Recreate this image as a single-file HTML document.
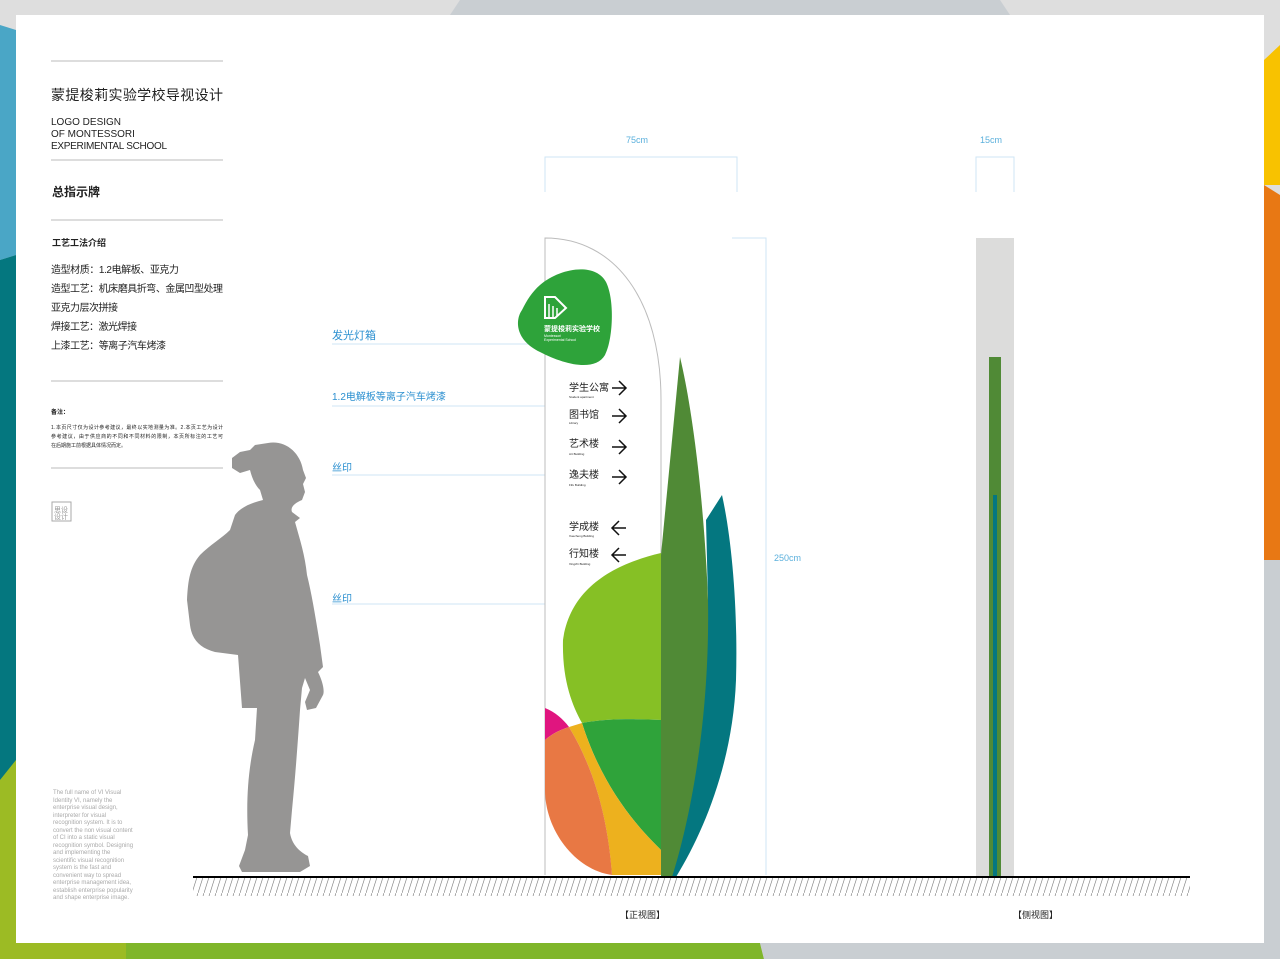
<!DOCTYPE html>
<html><head><meta charset="utf-8"><style>
html,body{margin:0;padding:0;width:1280px;height:959px;overflow:hidden;background:#dcdcdc;font-family:"Liberation Sans","Noto Sans CJK SC",sans-serif}
svg{display:block}
</style></head><body>
<svg width="1280" height="959" viewBox="0 0 1280 959" xmlns="http://www.w3.org/2000/svg" font-family="Liberation Sans, Noto Sans CJK SC, sans-serif">
<rect x="0" y="0" width="1280" height="959" fill="#dedede"/>
<polygon points="460,0 1000,0 1010,15 450,15" fill="#c9ced2"/>
<polygon points="0,25 16,30 16,255 0,260" fill="#4aa6c6"/>
<polygon points="0,260 16,255 16,770 0,780" fill="#04777f"/>
<polygon points="0,780 16,760 16,959 0,959" fill="#9cbb24"/>
<rect x="0" y="943" width="126" height="16" fill="#9cbb24"/>
<polygon points="126,943 760,943 764,959 126,959" fill="#7fb62a"/>
<polygon points="760,943 1280,943 1280,959 764,959" fill="#c9ced2"/>
<polygon points="1264,60 1280,45 1280,185 1264,185" fill="#f8c200"/>
<polygon points="1264,185 1280,195 1280,568 1264,560" fill="#e87814"/>
<rect x="1264" y="560" width="16" height="383" fill="#c9ced2"/>
<rect x="16" y="15" width="1248" height="928" fill="#fff"/>

<g fill="#222">
<line x1="51" y1="61" x2="223" y2="61" stroke="#bbb"/>
<text x="51" y="100" font-size="14" textLength="172">蒙提梭莉实验学校导视设计</text>
<text x="51" y="125" font-size="10">LOGO DESIGN</text>
<text x="51" y="137" font-size="10">OF MONTESSORI</text>
<text x="51" y="149" font-size="10" textLength="116">EXPERIMENTAL SCHOOL</text>
<line x1="51" y1="160" x2="223" y2="160" stroke="#bbb"/>
<text x="52" y="196" font-size="12" font-weight="bold">总指示牌</text>
<line x1="51" y1="220" x2="223" y2="220" stroke="#bbb"/>
<text x="52" y="246" font-size="9" font-weight="bold">工艺工法介绍</text>
<text x="51" y="273" font-size="10" textLength="128">造型材质：1.2电解板、亚克力</text>
<text x="51" y="292" font-size="10" textLength="172">造型工艺：机床磨具折弯、金属凹型处理</text>
<text x="51" y="311" font-size="10" textLength="67">亚克力层次拼接</text>
<text x="51" y="330" font-size="10" textLength="86">焊接工艺：激光焊接</text>
<text x="51" y="349" font-size="10" textLength="115">上漆工艺：等离子汽车烤漆</text>
<line x1="51" y1="381" x2="223" y2="381" stroke="#bbb"/>
<text x="51" y="414" font-size="6" font-weight="bold">备注：</text>
<text x="51" y="429" font-size="5" textLength="172">1.本页尺寸仅为设计参考建议，最终以实地测量为准。2.本页工艺为设计</text>
<text x="51" y="438" font-size="5" textLength="172">参考建议，由于供应商的不同和不同材料的限制，本页所标注的工艺可</text>
<text x="51" y="447" font-size="5">在后期施工前根据具体情况而定。</text>
<line x1="51" y1="468" x2="223" y2="468" stroke="#bbb"/>
<rect x="52" y="502" width="19" height="19" fill="none" stroke="#aaa"/>
<text x="54" y="512" font-size="7" fill="#999">思设</text>
<text x="54" y="519" font-size="7" fill="#999">设计</text>
</g>
<g fill="#aaa" font-size="6">
<text x="53" y="794">The full name of VI Visual</text>
<text x="53" y="802">Identity VI, namely the</text>
<text x="53" y="809">enterprise visual design,</text>
<text x="53" y="817">interpreter for visual</text>
<text x="53" y="824">recognition system. It is to</text>
<text x="53" y="832">convert the non visual content</text>
<text x="53" y="839">of CI into a static visual</text>
<text x="53" y="847">recognition symbol. Designing</text>
<text x="53" y="854">and implementing the</text>
<text x="53" y="862">scientific visual recognition</text>
<text x="53" y="869">system is the fast and</text>
<text x="53" y="877">convenient way to spread</text>
<text x="53" y="884">enterprise management idea,</text>
<text x="53" y="892">establish enterprise popularity</text>
<text x="53" y="899">and shape enterprise image.</text>
</g>

<path fill="#969594" d="M268,443 C285,440 300,452 303,470 L306,478 L303,484 L305,492 L302,500 C295,503 290,507 292,512 L300,518 L295,522 C300,540 305,555 307,575 C312,595 316,620 320,645 L323,667 L318,672 C322,680 325,690 323,695 L316,708 L307,710 L305,702 L310,690 L305,678 L302,688 L300,710 C298,740 295,780 292,810 L290,833 C292,845 300,852 308,856 L310,866 L300,872 L242,872 L239,866 L245,850 L248,835 C246,800 248,770 255,740 L257,708 L242,708 L238,655 L215,652 C200,648 192,640 190,625 L187,600 C188,580 190,567 200,555 C210,545 222,538 230,530 L235,515 C240,508 250,503 263,500 L260,490 C255,485 252,478 250,470 L240,473 L232,468 L232,458 L240,452 L250,450 L255,445 Z"/>

<g fill="#2a8fd0" font-size="10">
<text x="332" y="339" font-size="11">发光灯箱</text>
<text x="332" y="400">1.2电解板等离子汽车烤漆</text>
<text x="332" y="471">丝印</text>
<text x="332" y="602">丝印</text>
</g>
<g stroke="#cfe6f4" stroke-width="1">
<line x1="332" y1="344" x2="545" y2="344"/>
<line x1="332" y1="406" x2="558" y2="406"/>
<line x1="332" y1="475" x2="557" y2="475"/>
<line x1="332" y1="604" x2="600" y2="604"/>
</g>

<g fill="#5bb0dc" font-size="9">
<text x="626" y="143">75cm</text>
<text x="980" y="143">15cm</text>
<text x="774" y="561">250cm</text>
</g>
<g stroke="#cfe6f4" fill="none">
<path d="M545,192 L545,157 L737,157 L737,192"/>
<path d="M976,192 L976,157 L1014,157 L1014,192"/>
<path d="M732,238 L766,238 L766,875"/>
</g>

<path d="M545,875 L545,238 C615,238 661,300 661,400 L661,875" fill="#fff" stroke="#bcbcbc" stroke-width="1"/>
<path d="M540,285 C560,268 595,262 606,282 C615,300 613,340 605,355 C595,372 565,365 540,352 C515,340 515,320 522,310 C527,300 532,292 540,285Z" fill="#2ea33a"/>
<g fill="#fff">
<path d="M545,297 L555,297 L566,308 L555,318 L545,318Z" fill="none" stroke="#fff" stroke-width="2"/>
<path d="M549,318 L549,304 M553,318 L553,306 M557,316 L557,308" stroke="#fff" stroke-width="1.5"/>
<text x="544" y="331" font-size="7" font-weight="bold">蒙提梭莉实验学校</text>
<text x="544" y="337" font-size="3.5">Montessori</text>
<text x="544" y="341" font-size="3.5">Experimental School</text>
</g>
<g fill="#222">
<text x="569" y="391" font-size="10">学生公寓</text><text x="569" y="398" font-size="3">Student apartment</text>
<text x="569" y="418" font-size="10">图书馆</text><text x="569" y="424" font-size="3">Library</text>
<text x="569" y="447" font-size="10">艺术楼</text><text x="569" y="455" font-size="3">Art Building</text>
<text x="569" y="478" font-size="10">逸夫楼</text><text x="569" y="486" font-size="3">Fifu Building</text>
<text x="569" y="530" font-size="10">学成楼</text><text x="569" y="537" font-size="3">Xuecheng Building</text>
<text x="569" y="557" font-size="10">行知楼</text><text x="569" y="565" font-size="3">Xingzhi Building</text>
</g>
<g stroke="#111" stroke-width="1.5" fill="none">
<path d="M612,388 L626,388 M619,381 L626,388 L619,395"/>
<path d="M612,416 L626,416 M619,409 L626,416 L619,423"/>
<path d="M612,447 L626,447 M619,440 L626,447 L619,454"/>
<path d="M612,477 L626,477 M619,470 L626,477 L619,484"/>
<path d="M612,528 L626,528 M619,521 L612,528 L619,535"/>
<path d="M612,555 L626,555 M619,548 L612,555 L619,562"/>
</g>
<path d="M661,553 C610,565 570,590 563,640 C562,680 572,705 582,723 C610,718 640,719 661,720Z" fill="#86c025"/>
<path d="M582,723 C610,718 640,719 661,720 L661,850 C630,820 600,780 582,723Z" fill="#2fa33a"/>
<path d="M545,708 C555,712 563,719 569,727 C560,730 553,733 545,740Z" fill="#e0157f"/>
<path d="M569,727 L582,723 C600,780 630,820 661,850 L661,875 L612,875 C608,820 595,770 569,727Z" fill="#edb11e"/>
<path d="M545,740 C553,733 560,730 569,727 C595,770 608,820 612,875 C575,870 545,830 545,790Z" fill="#e87844"/>
<path d="M706,520 L722,495 C732,540 738,610 736,680 C733,760 705,830 676,877 L668,877 C690,820 705,720 708,600Z" fill="#047780"/>
<path d="M661,555 L680,357 C695,420 705,520 708,600 C710,720 690,820 672,877 L661,877Z" fill="#508a36"/>

<rect x="976" y="238" width="38" height="639" fill="#dcdcdb"/>
<rect x="989" y="357" width="12" height="520" fill="#508a36"/>
<rect x="993" y="495" width="4" height="382" fill="#047780"/>

<defs><pattern id="h" width="6" height="19" patternUnits="userSpaceOnUse"><line x1="6" y1="0" x2="0" y2="19" stroke="#888" stroke-width="0.7"/></pattern></defs>
<rect x="193" y="878" width="997" height="18" fill="url(#h)"/>
<line x1="193" y1="877" x2="1190" y2="877" stroke="#000" stroke-width="2"/>
<text x="620" y="918" font-size="9" fill="#222">【正视图】</text>
<text x="1013" y="918" font-size="9" fill="#222">【侧视图】</text>
</svg>
</body></html>
